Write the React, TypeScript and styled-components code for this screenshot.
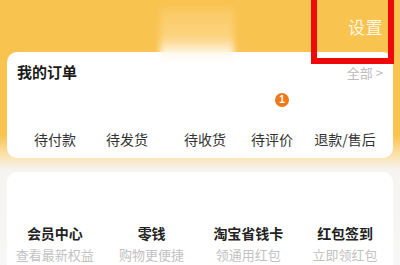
import React from "react";
import styled, { createGlobalStyle } from "styled-components";

const Global = createGlobalStyle`
  html, body { margin: 0; padding: 0; }
  body {
    width: 400px;
    height: 265px;
    overflow: hidden;
    font-family: "Noto Sans CJK SC", "Noto Sans", sans-serif;
    background: linear-gradient(180deg, #f9c34f 0px, #f9c34f 135px, #fbe3b0 156px, #f6f4f1 170px, #f7f7f7 265px);
  }
`;

const Page = styled.div`
  position: relative;
  padding: 0 7px;
  height: 265px;
  box-sizing: border-box;
`;

const Header = styled.div`
  height: 52px;
  display: flex;
  align-items: center;
  justify-content: flex-end;
  padding-right: 10px;
`;

const Settings = styled.span`
  font-size: 17px;
  color: rgba(255, 255, 255, 0.88);
  letter-spacing: 0.5px;
`;

const BlurName = styled.div`
  position: absolute;
  left: 160px;
  top: 8px;
  width: 74px;
  height: 54px;
  background: linear-gradient(180deg, rgba(251, 205, 110, 0.6) 0%, rgba(252, 215, 140, 0.8) 55%, rgba(255, 250, 240, 0.95) 85%, rgba(255, 255, 255, 1) 100%);
  filter: blur(3px);
`;

const Highlight = styled.div`
  position: absolute;
  left: 311px;
  top: -10px;
  width: 83px;
  height: 74px;
  box-sizing: border-box;
  border: 6px solid #ee0a0a;
`;

const Card = styled.div<{ $pb?: number }>`
  background: #fff;
  border-radius: 10px;
  padding: 8px 10px ${(p) => p.$pb ?? 0}px 10px;
  box-sizing: border-box;
`;

const TitleRow = styled.div`
  display: flex;
  justify-content: space-between;
  align-items: center;
  height: 22px;
`;

const Title = styled.span`
  font-size: 15px;
  font-weight: 700;
  color: #1a1a1a;
`;

const More = styled.span`
  font-size: 13px;
  color: #bdbdbd;
  margin-top: 3px;
`;

const OrderGrid = styled.div`
  display: grid;
  grid-template-columns: 72px 72px 84px 50px 96px;
  margin-left: 2px;
  margin-right: -10px;
  margin-top: 47px;
`;

const OrderItem = styled.div`
  position: relative;
  display: flex;
  justify-content: center;
  font-size: 14px;
  color: #333;
  line-height: 20px;
`;

const Badge = styled.span`
  position: absolute;
  top: -36px;
  left: 28px;
  width: 14px;
  height: 14px;
  border-radius: 50%;
  background: #f07a19;
  color: #fff;
  font-size: 10px;
  font-weight: 700;
  line-height: 14px;
  text-align: center;
  font-family: "Liberation Sans", sans-serif;
`;

const Card2 = styled(Card)`
  margin-top: 14px;
  height: 120px;
  padding: 0;
`;

const ToolGrid = styled.div`
  display: grid;
  grid-template-columns: repeat(4, 1fr);
  padding-top: 50px;
  margin: 0 -0.5px;
`;

const Tool = styled.div`
  display: flex;
  flex-direction: column;
  align-items: center;
`;

const ToolName = styled.span`
  font-size: 14px;
  font-weight: 700;
  color: #222;
  line-height: 22px;
`;

const ToolSub = styled.span`
  font-size: 13px;
  color: #c2c2c2;
  line-height: 22px;
`;

const orders = ["待付款", "待发货", "待收货", "待评价", "退款/售后"];
const tools = [
  { name: "会员中心", sub: "查看最新权益" },
  { name: "零钱", sub: "购物更便捷" },
  { name: "淘宝省钱卡", sub: "领通用红包" },
  { name: "红包签到", sub: "立即领红包" },
];

export default function App() {
  return (
    <>
      <Global />
      <Page>
        <Header>
          <Settings>设置</Settings>
        </Header>
        <Card $pb={9}>
          <TitleRow>
            <Title>我的订单</Title>
            <More>全部 &gt;</More>
          </TitleRow>
          <OrderGrid>
            {orders.map((o) => (
              <OrderItem key={o}>
                {o}
                {o === "待评价" && <Badge>1</Badge>}
              </OrderItem>
            ))}
          </OrderGrid>
        </Card>
        <Card2>
          <ToolGrid>
            {tools.map((t) => (
              <Tool key={t.name}>
                <ToolName>{t.name}</ToolName>
                <ToolSub>{t.sub}</ToolSub>
              </Tool>
            ))}
          </ToolGrid>
        </Card2>
        <BlurName />
        <Highlight />
      </Page>
    </>
  );
}
